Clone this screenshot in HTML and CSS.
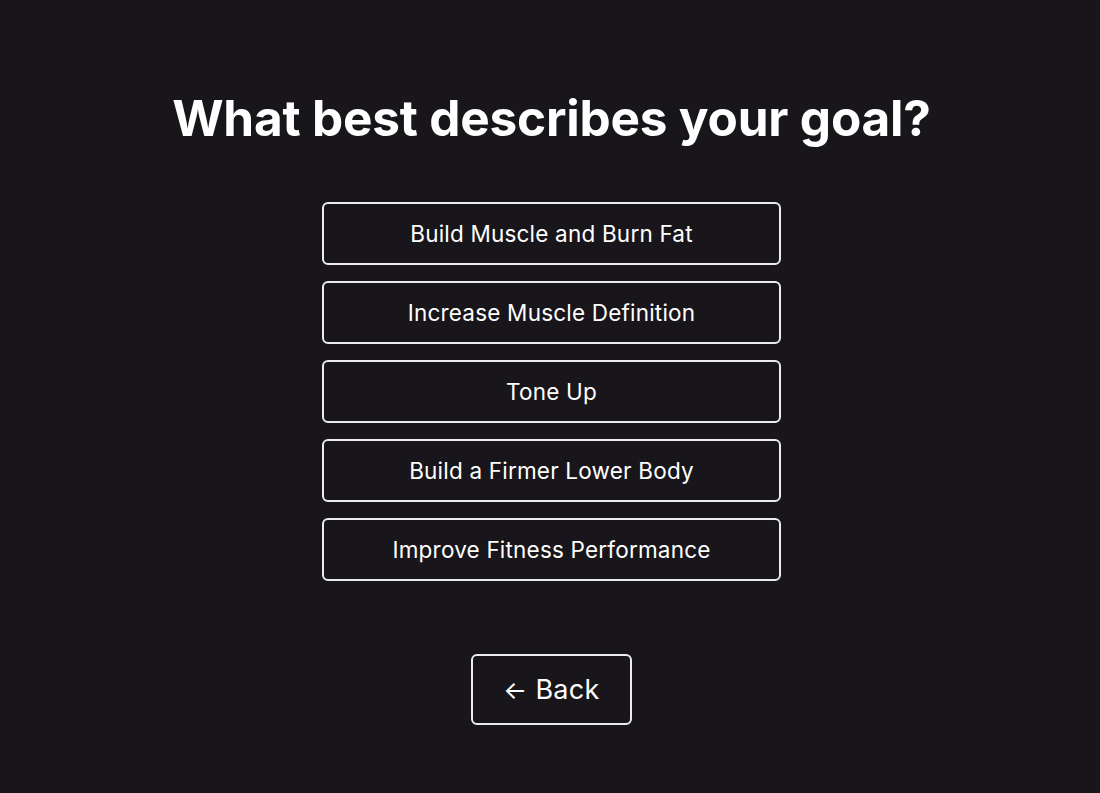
FILE: index.html
```html
<!DOCTYPE html>
<html>
<head>
<meta charset="utf-8">
<link rel="stylesheet" href="styles.css">
</head>
<body>
<main class="page">
  <h1 class="title">What best describes your goal?</h1>
  <div class="options">
    <button class="option">Build Muscle and Burn Fat</button>
    <button class="option">Increase Muscle Definition</button>
    <button class="option">Tone Up</button>
    <button class="option">Build a Firmer Lower Body</button>
    <button class="option">Improve Fitness Performance</button>
  </div>
  <button class="back"><span class="arrow">&larr;</span> Back</button>
</main>
</body>
</html>
```
FILE: styles.css
```css
html, body {
  margin: 0;
  padding: 0;
  background: #18161a;
  height: 100%;
}
.page {
  display: flex;
  flex-direction: column;
  align-items: center;
  font-family: Inter, "Noto Sans", sans-serif;
  color: #ffffff;
  padding-top: 86px;
  padding-left: 3px;
}
.title {
  margin: 0;
  font-size: 49.5px;
  font-weight: 700;
  line-height: 64px;
  letter-spacing: -0.2px;
}
.options {
  display: flex;
  flex-direction: column;
  gap: 16px;
  margin-top: 52px;
}
.option {
  width: 459px;
  height: 63px;
  background: transparent;
  border: 2px solid #ececec;
  border-radius: 6px;
  color: #ffffff;
  font-family: Inter, "Noto Sans", sans-serif;
  font-size: 22.5px;
  font-weight: 400;
  letter-spacing: 0.2px;
  padding: 0;
}
.back {
  margin-top: 73px;
  width: 161px;
  height: 71px;
  background: transparent;
  border: 2px solid #ececec;
  border-radius: 6px;
  color: #ffffff;
  font-family: Inter, "Noto Sans", sans-serif;
  font-size: 27px;
  font-weight: 400;
  letter-spacing: 0.3px;
  padding: 0;
}
.arrow {
  font-size: 25px;
}
```
